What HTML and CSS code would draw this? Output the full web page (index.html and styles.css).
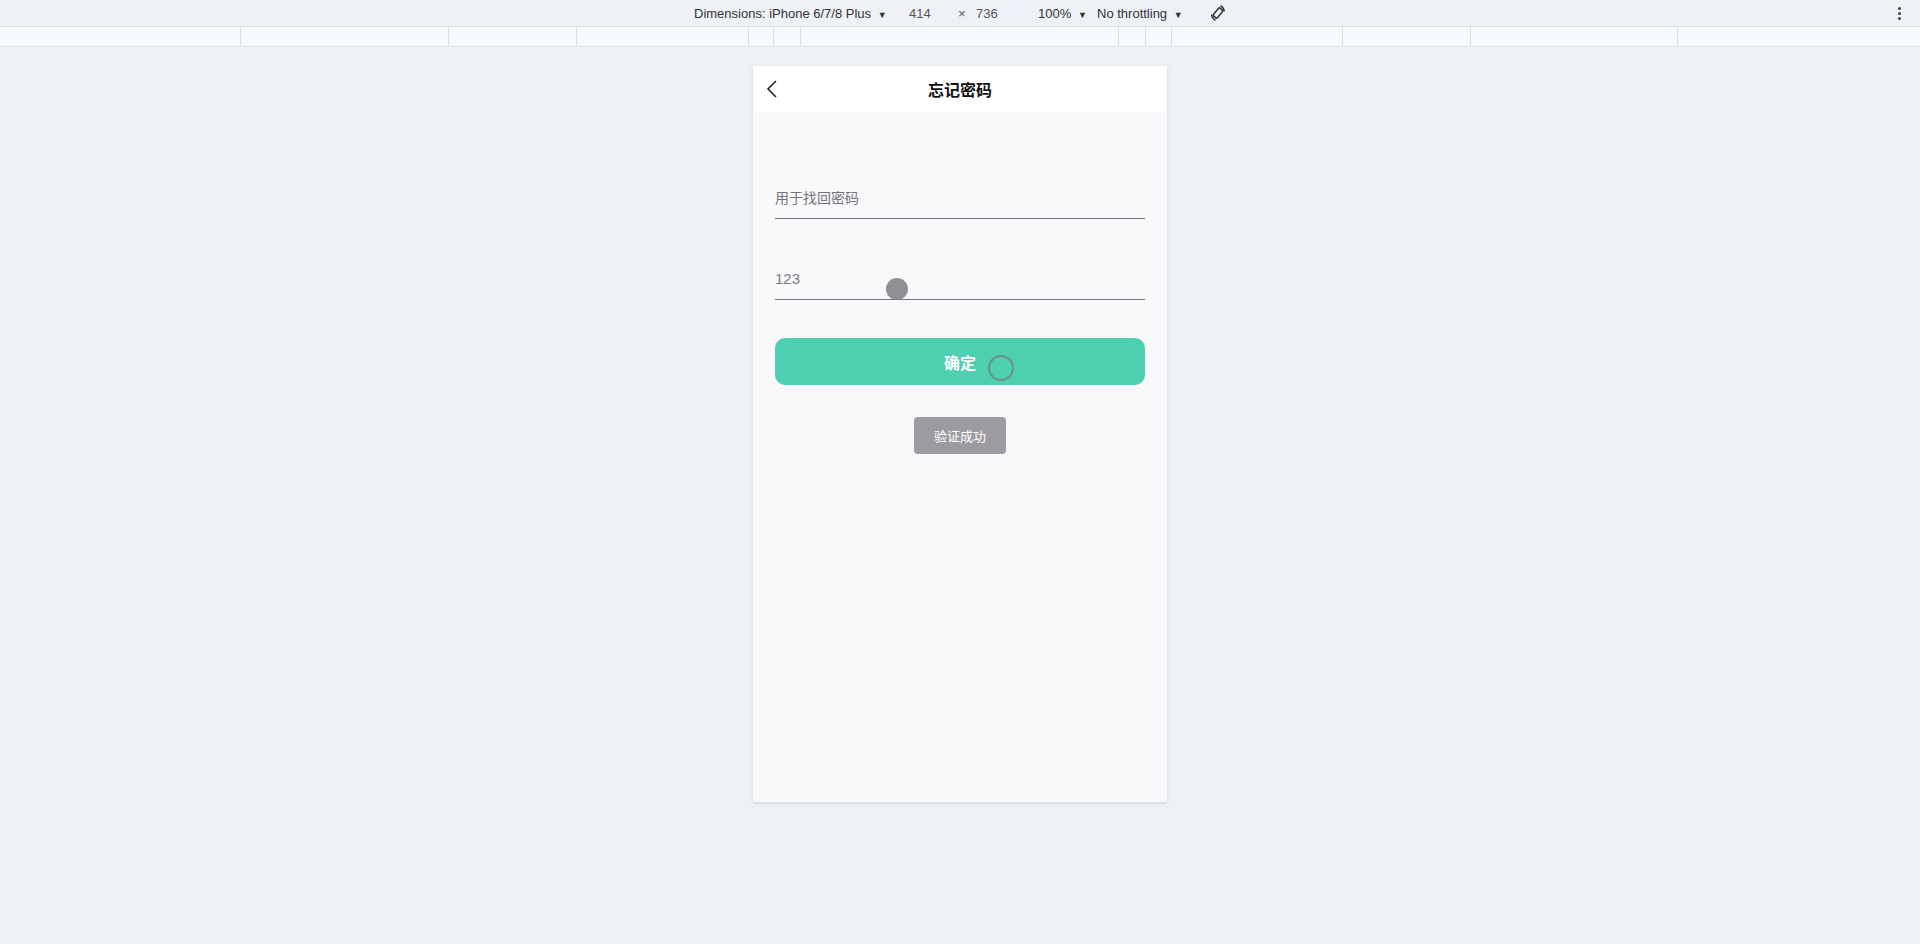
FILE: index.html
```html
<!DOCTYPE html>
<html lang="zh-CN">
<head>
    <meta charset="UTF-8" />
    <meta name="viewport" content="width=device-width, initial-scale=1.0" />
    <title>忘记密码</title>
    <link rel="stylesheet" href="styles.css">
</head>
<body>
    <div class="toolbar">
        <span class="dim-label">Dimensions: iPhone 6/7/8 Plus <i class="caret">▼</i></span>
        <span class="dim-w">414</span>
        <span class="dim-x">×</span>
        <span class="dim-h">736</span>
        <span class="zoom">100% <i class="caret">▼</i></span>
        <span class="throttle">No throttling <i class="caret">▼</i></span>
        <svg class="rotate" width="16" height="18" viewBox="0 0 16 18">
            <rect x="5.4" y="4" width="5.2" height="10" rx="1" transform="rotate(40 8 9)" stroke="#333" stroke-width="1.5" fill="none"/>
            <path d="M1.8 10.5 A7 7 0 0 0 5.5 16.3" stroke="#333" stroke-width="1.6" fill="none"/>
            <path d="M14.2 7.5 A7 7 0 0 0 10.5 1.7" stroke="#333" stroke-width="1.6" fill="none"/>
        </svg>
        <span class="more"><b></b><b></b><b></b></span>
    </div>

    <div class="ruler">
        <span style="width:241px"></span>
        <span style="width:208px"></span>
        <span style="width:128px"></span>
        <span style="width:172px"></span>
        <span style="width:25px"></span>
        <span style="width:27px"></span>
        <span style="width:318px"></span>
        <span style="width:27px"></span>
        <span style="width:26px"></span>
        <span style="width:171px"></span>
        <span style="width:128px"></span>
        <span style="width:207px"></span>
    </div>

    <div class="device">
        <header class="nav">
            <svg class="back" width="12" height="20" viewBox="0 0 12 20">
                <path d="M10 2 L2 10 L10 18" stroke="#222" stroke-width="1.6" fill="none"/>
            </svg>
            <h1>忘记密码</h1>
        </header>
        <main class="form">
            <div class="field"><input type="text" placeholder="用于找回密码"></div>
            <div class="field"><input type="text" value="123"></div>
            <button class="submit">确定</button>
            <div class="toast">验证成功</div>
            <span class="touch-dot"></span>
            <span class="touch-ring"></span>
        </main>
    </div>
</body>
</html>
```

FILE: styles.css
```css
* {
    box-sizing: border-box;
}

body {
    margin: 0;
    background-color: #eef1f5;
    font-family: 'Noto Sans', 'Noto Sans CJK SC', sans-serif;
    height: 944px;
    overflow: hidden;
}

.toolbar {
    height: 27px;
    display: flex;
    align-items: center;
    padding-left: 694px;
    font-family: 'Liberation Sans', 'Noto Sans', sans-serif;
    font-size: 13px;
    color: #333;
    border-bottom: 1px solid #d6dbe1;
    position: relative;
}

.toolbar span {
    white-space: nowrap;
}

.caret {
    font-style: normal;
    font-size: 9px;
    margin-left: 3px;
}

.dim-label {
    width: 215px;
}

.dim-w {
    width: 49px;
    color: #555;
}

.dim-x {
    width: 18px;
    color: #555;
}

.dim-h {
    width: 62px;
    color: #555;
}

.zoom {
    width: 59px;
}

.throttle {
    width: 113px;
}

.more {
    position: absolute;
    right: 19px;
    top: 7px;
    display: flex;
    flex-direction: column;
    gap: 2px;
}

.more b {
    width: 3px;
    height: 3px;
    background-color: #444;
    border-radius: 50%;
}

.ruler {
    height: 20px;
    display: flex;
    background-color: #f6f9fd;
    border-bottom: 1px solid #e1e5ea;
}

.ruler span {
    height: 100%;
    border-right: 1px solid #d9dde3;
}

.device {
    width: 414px;
    height: 736px;
    margin: 19px auto 0;
    background-color: #f9f8fb;
    display: flex;
    flex-direction: column;
    box-shadow: 0 1px 3px rgba(150, 160, 175, 0.35);
}

.nav {
    height: 46px;
    background-color: #fff;
    display: flex;
    align-items: center;
    justify-content: center;
    position: relative;
}

.nav h1 {
    margin: 0;
    font-size: 16px;
    font-weight: 700;
    color: #111;
}

.back {
    position: absolute;
    left: 13px;
    top: 13px;
}

.form {
    padding: 63px 22px 0;
    display: flex;
    flex-direction: column;
    position: relative;
    flex: 1;
}

.field {
    height: 44px;
    border-bottom: 1px solid #77767c;
    display: flex;
    align-items: center;
    padding-top: 2px;
}

.field + .field {
    margin-top: 37px;
}

.field input {
    border: none;
    outline: none;
    background: transparent;
    width: 100%;
    padding: 0;
    font-family: 'Liberation Sans', 'Noto Sans CJK SC', sans-serif;
    font-size: 15px;
    color: #7b7b82;
}

.field input::placeholder {
    font-size: 14px;
    color: #74737c;
}

.submit {
    margin-top: 38px;
    height: 47px;
    border: none;
    border-radius: 10px;
    background-color: #4dd0b0;
    color: #fff;
    font-family: 'Noto Sans CJK SC', sans-serif;
    font-size: 16px;
    font-weight: 700;
    cursor: pointer;
}

.toast {
    align-self: center;
    margin-top: 32px;
    width: 92px;
    height: 37px;
    background-color: #9d9b9f;
    color: #fff;
    border-radius: 4px;
    display: flex;
    align-items: center;
    justify-content: center;
    font-family: 'Noto Sans CJK SC', sans-serif;
    font-size: 13px;
}

.touch-dot {
    position: absolute;
    left: 133px;
    top: 166px;
    width: 22px;
    height: 22px;
    border-radius: 50%;
    background-color: rgba(125, 124, 130, 0.85);
}

.touch-ring {
    position: absolute;
    left: 235px;
    top: 243px;
    width: 26px;
    height: 26px;
    border-radius: 50%;
    border: 2px solid rgba(120, 120, 120, 0.75);
}
```
